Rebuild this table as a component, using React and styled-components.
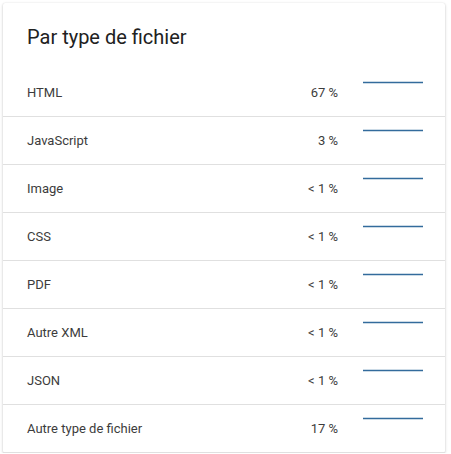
import React from "react";
import styled, { createGlobalStyle } from "styled-components";

const GlobalStyle = createGlobalStyle`
  body {
    margin: 0;
    background: #ffffff;
    font-family: Roboto, "Liberation Sans", sans-serif;
  }
`;

const Card = styled.div`
  margin: 3px 6px 0 3px;
  background: #fff;
  box-shadow: 0 1px 3px rgba(0, 0, 0, 0.22), 0 0 1px rgba(0, 0, 0, 0.12);
  border-radius: 2px;
`;

const Title = styled.h2`
  margin: 0;
  padding: 22px 24px 20px;
  font-size: 20px;
  line-height: 24px;
  font-weight: 400;
  color: #212121;
`;

const Row = styled.div`
  display: grid;
  grid-template-columns: 1fr auto 60px;
  column-gap: 25px;
  height: 48px;
  padding: 0 22px 0 24px;
  border-bottom: 1px solid #e0e0e0;
  box-sizing: border-box;
  align-items: center;
`;

const Label = styled.span`
  font-size: 13px;
  color: #3c3c3c;
`;

const Share = styled.span`
  font-size: 13px;
  color: #3c3c3c;
  text-align: right;
`;

const Spark = styled.svg`
  align-self: start;
  margin-top: 12px;
  display: block;
`;

const types = [
  { name: "HTML", share: "67 %" },
  { name: "JavaScript", share: "3 %" },
  { name: "Image", share: "< 1 %" },
  { name: "CSS", share: "< 1 %" },
  { name: "PDF", share: "< 1 %" },
  { name: "Autre XML", share: "< 1 %" },
  { name: "JSON", share: "< 1 %" },
  { name: "Autre type de fichier", share: "17 %" },
];

const App = () => (
  <>
    <GlobalStyle />
    <Card>
      <Title>Par type de fichier</Title>
      {types.map((t) => (
        <Row key={t.name}>
          <Label>{t.name}</Label>
          <Share>{t.share}</Share>
          <Spark width="60" height="4" viewBox="0 0 60 4">
            <line x1="0" y1="1.5" x2="60" y2="1.5" stroke="#336b9c" strokeWidth="1.3" />
          </Spark>
        </Row>
      ))}
    </Card>
  </>
);

export default App;
